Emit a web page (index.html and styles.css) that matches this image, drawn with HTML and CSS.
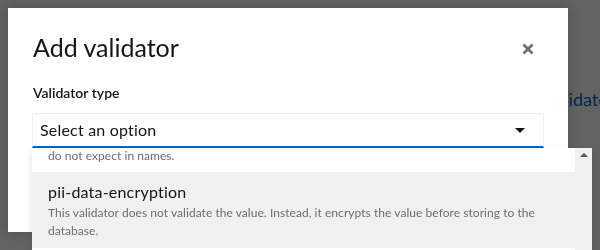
FILE: index.html
```html
<!DOCTYPE html>
<html>
<head>
<meta charset="utf-8">
<link rel="stylesheet" href="styles.css">
</head>
<body>
<div class="page">
  <div class="page-row"><a class="page-link">Add validator</a></div>
</div>
<div class="backdrop"></div>
<div class="modal">
  <header class="modal-header">
    <h1 class="modal-title">Add validator</h1>
    <button class="close-btn" aria-label="Close">
      <svg width="12" height="12" viewBox="0 0 12 12"><path d="M1.5 1.5 L10.5 10.5 M10.5 1.5 L1.5 10.5" stroke="#6a6e73" stroke-width="2.6" stroke-linecap="butt"/></svg>
    </button>
  </header>
  <div class="form-group">
    <label class="form-label">Validator type</label>
    <div class="select">
      <div class="select-toggle">
        <span class="select-text">Select an option</span>
        <span class="caret"></span>
      </div>
      <div class="menu">
        <ul class="menu-list">
          <li class="menu-item partial">
            <span class="item-desc">do not expect in names.</span>
          </li>
          <li class="menu-item hovered">
            <span class="item-title">pii-data-encryption</span>
            <span class="item-desc">This validator does not validate the value. Instead, it encrypts the value before storing to the database.</span>
          </li>
          <li class="menu-item">
            <span class="item-title">uri</span>
          </li>
        </ul>
        <div class="scrollbar"><span class="scroll-up"></span></div>
      </div>
    </div>
  </div>
</div>
</body>
</html>
```
FILE: styles.css
```css
html, body {
  margin: 0;
  padding: 0;
  width: 600px;
  height: 250px;
  overflow: hidden;
  background: #fff;
  font-family: "Lato", "Noto Sans", sans-serif;
  color: #151515;
}
.page {
  padding-top: 88px;
}
.page-row {
  padding-left: 510px;
  white-space: nowrap;
}
.page-link {
  color: #06c;
  font-size: 18px;
}
.backdrop {
  position: fixed;
  inset: 0;
  background: rgba(3, 3, 3, 0.62);
}
.modal {
  position: absolute;
  left: 8px;
  top: 8px;
  width: 560px;
  height: 224px;
  box-sizing: border-box;
  background: #fff;
  padding: 23px 24px 0 24px;
  box-shadow: 0 0 12px rgba(0,0,0,0.2);
}
.modal-header {
  display: flex;
  align-items: center;
  justify-content: space-between;
}
.modal-title {
  margin: 0;
  font-size: 25px;
  font-weight: 400;
  line-height: 32px;
  padding-left: 1px;
}
.close-btn {
  border: 0;
  background: none;
  padding: 0;
  width: 12px;
  height: 12px;
  margin-right: 10px;
  margin-top: 4px;
  display: flex;
}
.form-group {
  margin-top: 20px;
}
.form-label {
  display: block;
  font-size: 14px;
  font-weight: 600;
  line-height: 20px;
  padding-left: 1px;
  margin-bottom: 10px;
}
.select {
  position: relative;
}
.select-toggle {
  height: 35px;
  box-sizing: border-box;
  border: 1px solid #f0f0f0;
  border-bottom: 2px solid #06c;
  display: flex;
  align-items: center;
  justify-content: space-between;
  padding: 0 18px 0 7px;
}
.select-text {
  font-size: 16px;
  line-height: 24px;
  letter-spacing: 0.2px;
}
.caret {
  width: 0;
  height: 0;
  border-left: 5px solid transparent;
  border-right: 5px solid transparent;
  border-top: 5px solid #151515;
}
.menu {
  position: absolute;
  left: 0;
  top: 100%;
  width: 560px;
  height: 110px;
  display: flex;
  background: #fff;
  box-shadow: 0 4px 8px rgba(3,3,3,0.12);
  overflow: hidden;
}
.menu-list {
  list-style: none;
  margin: 0;
  padding: 0;
  width: 543px;
  flex: none;
}
.menu-item {
  display: flex;
  flex-direction: column;
  padding: 8px 16px;
}
.menu-item.partial {
  padding-top: 0;
  margin-top: -1px;
  padding-bottom: 7px;
}
.menu-item.hovered {
  background: #f0f0f0;
}
.item-title {
  font-size: 16px;
  line-height: 24px;
  letter-spacing: 0.2px;
}
.item-desc {
  font-size: 12px;
  line-height: 18px;
  color: #6a6e73;
  letter-spacing: 0.05px;
}
.scrollbar {
  flex: 1;
  background: #f1f1f1;
  display: flex;
  justify-content: center;
  padding-top: 5px;
  box-sizing: border-box;
}
.scroll-up {
  width: 0;
  height: 0;
  border-left: 4px solid transparent;
  border-right: 4px solid transparent;
  border-bottom: 4px solid #505050;
}
```
